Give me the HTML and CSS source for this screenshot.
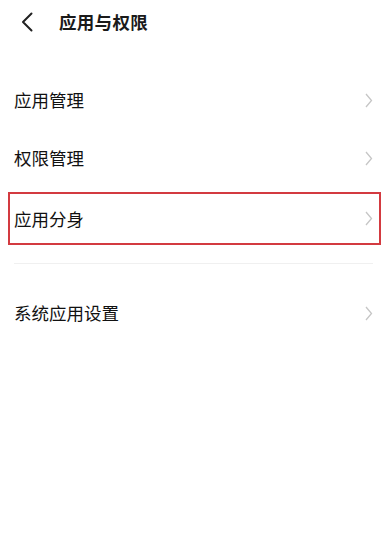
FILE: index.html
```html
<!DOCTYPE html>
<html lang="zh">
<head>
<meta charset="utf-8">
<link rel="stylesheet" href="styles.css">
</head>
<body>
<div class="screen">
  <header class="topbar">
    <svg class="back" width="12" height="20" viewBox="0 0 12 20"><path d="M10.5 1.5 L2 10 L10.5 18.5" fill="none" stroke="#222" stroke-width="2" stroke-linecap="round" stroke-linejoin="round"/></svg>
    <h1 class="title">应用与权限</h1>
  </header>
  <ul class="list">
    <li class="item"><span class="label">应用管理</span><svg class="chev" width="8" height="15" viewBox="0 0 8 15"><path d="M1 1 L6.5 7.5 L1 14" fill="none" stroke="#c6c6c6" stroke-width="1.3"/></svg></li>
    <li class="item"><span class="label">权限管理</span><svg class="chev" width="8" height="15" viewBox="0 0 8 15"><path d="M1 1 L6.5 7.5 L1 14" fill="none" stroke="#c6c6c6" stroke-width="1.3"/></svg></li>
    <li class="item highlight"><span class="label">应用分身</span><svg class="chev" width="8" height="15" viewBox="0 0 8 15"><path d="M1 1 L6.5 7.5 L1 14" fill="none" stroke="#c6c6c6" stroke-width="1.3"/></svg></li>
  </ul>
  <div class="divider"></div>
  <ul class="list second">
    <li class="item"><span class="label">系统应用设置</span><svg class="chev" width="8" height="15" viewBox="0 0 8 15"><path d="M1 1 L6.5 7.5 L1 14" fill="none" stroke="#c6c6c6" stroke-width="1.3"/></svg></li>
  </ul>
</div>
</body>
</html>
```
FILE: styles.css
```css
* { box-sizing: border-box; }
html, body { margin: 0; padding: 0; background: #fff; }
body { font-family: "Noto Sans CJK SC", "Noto Sans", sans-serif; color: #111; }
.screen { width: 387px; height: 543px; background: #fff; }
.topbar { height: 44px; display: flex; align-items: center; padding-left: 21px; }
.back { display: block; }
.title { margin: 0 0 0 26px; font-size: 17.5px; font-weight: 700; line-height: 1; letter-spacing: 0.3px; color: #1a1a1a; }
.list { list-style: none; margin: 0; padding: 0; }
.list:first-of-type { margin-top: 27px; }
.item { height: 58px; display: flex; align-items: center; justify-content: space-between; padding: 0 14px; }
.label { font-size: 17.5px; line-height: 1; font-weight: 400; }
.chev { display: block; }
.highlight { margin: 5px 6px 0 8px; height: 53px; border: 2.5px solid #d33a40; padding: 0 6px 0 4px; }
.divider { margin: 18px 14px 0 14px; height: 1px; background: #f0f0f0; }
.second { margin-top: 20px; }
```
